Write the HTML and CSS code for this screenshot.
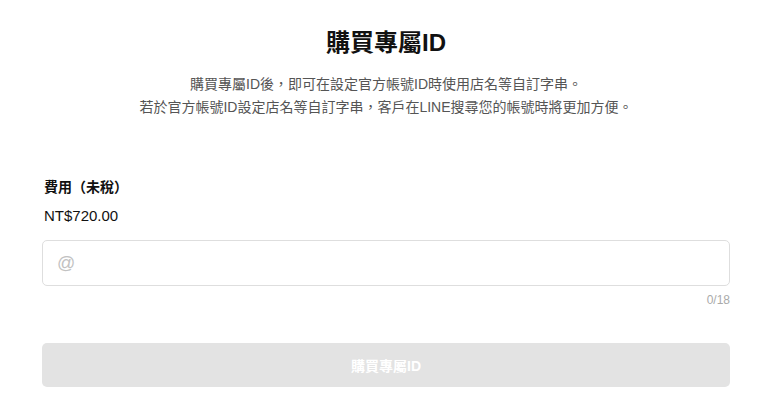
FILE: index.html
```html
<!DOCTYPE html>
<html lang="zh-Hant">
<head>
    <meta charset="UTF-8">
    <meta name="viewport" content="width=device-width, initial-scale=1.0">
    <title>購買專屬ID</title>
    <link rel="stylesheet" href="styles.css">
</head>
<body>
    <div class="container">
        <div class="header">
            <h1>購買專屬ID</h1>
            <p>購買專屬ID後，即可在設定官方帳號ID時使用店名等自訂字串。<br>若於官方帳號ID設定店名等自訂字串，客戶在LINE搜尋您的帳號時將更加方便。</p>
        </div>

        <div class="fee">
            <div class="fee-label">費用（未稅）</div>
            <div class="fee-price">NT$720.00</div>
        </div>

        <div class="id-field">
            <div class="id-input">
                <span class="at">@</span>
                <input type="text" maxlength="18">
            </div>
            <div class="counter">0/18</div>
        </div>

        <button class="buy-btn" disabled>購買專屬ID</button>
    </div>
</body>
</html>
```

FILE: styles.css
```css
* {
    margin: 0;
    padding: 0;
    box-sizing: border-box;
}

body {
    font-family: "Liberation Sans", Arial, "Noto Sans CJK TC", sans-serif;
    background: white;
    color: #111;
}

.container {
    width: 688px;
    margin-left: 42px;
    padding-top: 26px;
}

.header {
    text-align: center;
}

.header h1 {
    font-size: 24px;
    font-weight: bold;
    line-height: 34px;
    color: #111;
}

.header p {
    margin-top: 13px;
    font-size: 14px;
    line-height: 23px;
    color: #555;
}

.fee {
    margin-top: 58px;
    padding-left: 2px;
}

.fee-label {
    font-size: 14px;
    font-weight: bold;
    line-height: 20px;
}

.fee-price {
    margin-top: 9px;
    font-size: 15px;
    line-height: 20px;
}

.id-field {
    margin-top: 14px;
}

.id-input {
    display: flex;
    align-items: center;
    height: 46px;
    padding: 0 14px;
    border: 1px solid #dedede;
    border-radius: 5px;
}

.at {
    font-size: 18px;
    color: #c2c2c2;
}

.id-input input {
    flex: 1;
    border: none;
    outline: none;
    font-size: 15px;
    margin-left: 4px;
}

.counter {
    margin-top: 6px;
    text-align: right;
    font-size: 12px;
    line-height: 16px;
    color: #aaa;
}

.buy-btn {
    display: block;
    width: 100%;
    height: 44px;
    margin-top: 35px;
    background: #e3e3e3;
    color: white;
    border: none;
    border-radius: 5px;
    font-family: inherit;
    font-size: 14px;
    font-weight: bold;
}
```
